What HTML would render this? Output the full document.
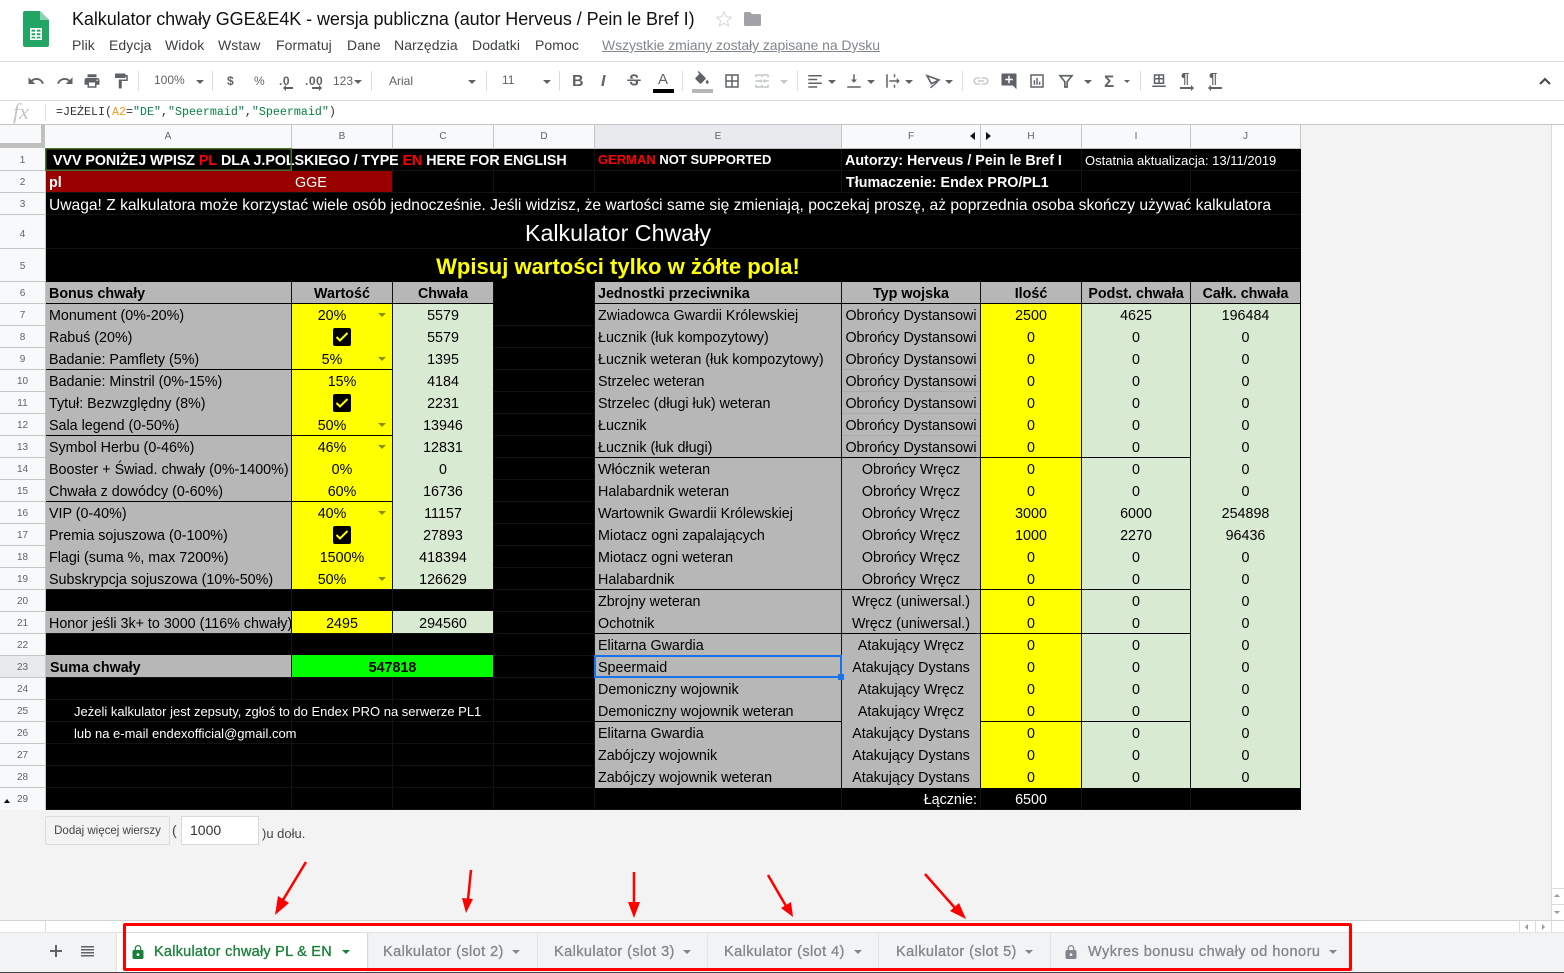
<!DOCTYPE html>
<html lang="pl"><head><meta charset="utf-8"><title>Kalkulator chwały</title>
<style>
html,body{margin:0;padding:0;width:1564px;height:973px;overflow:hidden;background:#fff;font-family:"Liberation Sans",sans-serif}
div,span,i,svg{position:absolute}
span.x,b.x{position:static}
.f{position:absolute}
.r{left:0;width:1564px;height:22px;font:14.3px/22px "Liberation Sans",sans-serif;color:#000}
.r i{font-style:normal;white-space:nowrap;top:1px}
.A{left:49px}.B{left:292px;width:100px;text-align:center}.D{left:292px;width:80px;text-align:center}
.C{left:393px;width:100px;text-align:center}.E{left:598px}.F{left:842px;width:138px;text-align:center}
.H{left:981px;width:100px;text-align:center}.I{left:1082px;width:108px;text-align:center}.J{left:1191px;width:109px;text-align:center}
.h i{font-weight:bold}
.m{font:14px/18px "Liberation Sans",sans-serif;color:#3c4043;top:36px;white-space:nowrap;letter-spacing:.08px}
.cl{top:125px;height:23px;border-right:1px solid #c4c7c5;background:#f8f9fa;font:10px/23px "Liberation Sans",sans-serif;color:#5f6368;text-align:center}
.rn{left:0;width:45px;font:10px/23px "Liberation Sans",sans-serif;color:#5f6368;text-align:center;border-bottom:1px solid #c4c7c5;height:21px}
.ck{left:333px;width:18px;height:18px;background:#000;border-radius:2px}
.dd{left:378px;width:0;height:0;border-left:4px solid transparent;border-right:4px solid transparent;border-top:4px solid #8c8c00}
.v{background:#000;width:1px}.g{background:#121212;width:1px}
.tb{top:81px;font:12px/1 "Liberation Sans",sans-serif;color:#5f6368;white-space:nowrap}
.sep{top:71px;width:1px;height:20px;background:#dadce0}
.ar{top:80px;width:0;height:0;border-left:4px solid transparent;border-right:4px solid transparent;border-top:4px solid #5f6368}
.ic{top:72px;width:18px;height:18px;fill:#5f6368}
.tab{top:942px;font:14.5px/20px "Liberation Sans",sans-serif;color:#80868b;white-space:nowrap;-webkit-text-stroke:.3px #80868b}
.tar{top:950px;width:0;height:0;border-left:4px solid transparent;border-right:4px solid transparent;border-top:4px solid #80868b}
.tsp{top:933px;width:1px;height:39px;background:#e3e5e7}
</style></head><body>

<!-- title bar -->
<svg style="left:23px;top:11px" width="26" height="36" viewBox="0 0 26 36"><path d="M2 0h15l9 9v25a2 2 0 0 1-2 2H2a2 2 0 0 1-2-2V2a2 2 0 0 1 2-2z" fill="#23a566"/><path d="M17 0l9 9h-9z" fill="#8ed1b1"/><path d="M7 17h12v12H7zm1.600 1.600v2h3.600v-2zm5.200 0v2h3.600v-2zm-5.200 3.600v2h3.600v-2zm5.200 0v2h3.600v-2zm-5.200 3.600v1.600h3.600v-1.600zm5.200 0v1.600h3.600v-1.600z" fill="#fff" fill-rule="evenodd"/></svg>
<div style="left:72px;top:8px;font:18px/22px 'Liberation Sans',sans-serif;color:#111;white-space:nowrap;letter-spacing:-.075px">Kalkulator chwały GGE&amp;E4K - wersja publiczna (autor Herveus / Pein le Bref I)</div>
<svg style="left:715px;top:10px" width="18" height="18" viewBox="0 0 24 24"><path d="M12 2.500l2.900 6.500 7.100.7-5.400 4.700 1.600 7-6.200-3.700-6.200 3.700 1.600-7L2 9.700l7.100-.7z" fill="none" stroke="#dadce0" stroke-width="1.600"/></svg>
<svg style="left:744px;top:12px" width="17" height="14" viewBox="0 0 17 14"><path d="M0 1.500A1.500 1.500 0 0 1 1.500 0H6l2 2h7.500A1.500 1.500 0 0 1 17 3.500V12.500A1.500 1.500 0 0 1 15.500 14h-14A1.500 1.500 0 0 1 0 12.500z" fill="#a2a3a7"/></svg>
<div class="m" style="left:72px">Plik</div><div class="m" style="left:109px">Edycja</div><div class="m" style="left:165px">Widok</div><div class="m" style="left:218px">Wstaw</div><div class="m" style="left:276px">Formatuj</div><div class="m" style="left:347px">Dane</div><div class="m" style="left:394px">Narzędzia</div><div class="m" style="left:472px">Dodatki</div><div class="m" style="left:535px">Pomoc</div>
<div class="m" style="left:602px;color:#80868b;text-decoration:underline;letter-spacing:-.07px">Wszystkie zmiany zostały zapisane na Dysku</div>
<div class="f" style="left:0;top:61px;width:1564px;height:1px;background:#dadce0"></div>

<!-- toolbar -->
<svg class="ic" style="left:27px" viewBox="0 0 24 24"><path d="M12.500 8c-2.650 0-5.050.99-6.900 2.600L2 7v9h9l-3.620-3.620c1.390-1.160 3.160-1.880 5.120-1.880 3.540 0 6.550 2.310 7.600 5.500l2.370-.78C21.080 11.030 17.150 8 12.500 8z"/></svg>
<svg class="ic" style="left:56px" viewBox="0 0 24 24"><path d="M18.400 10.600C16.550 8.990 14.150 8 11.500 8c-4.650 0-8.580 3.030-9.960 7.220L3.900 16c1.050-3.190 4.050-5.500 7.600-5.500 1.950 0 3.730.72 5.120 1.880L13 16h9V7l-3.600 3.600z"/></svg>
<svg class="ic" style="left:83px" viewBox="0 0 24 24"><path d="M19 8H5c-1.660 0-3 1.340-3 3v6h4v4h12v-4h4v-6c0-1.660-1.340-3-3-3zm-3 11H8v-5h8v5zm3-7c-.55 0-1-.45-1-1s.45-1 1-1 1 .45 1 1-.45 1-1 1zm-1-9H6v4h12V3z"/></svg>
<svg class="ic" style="left:112px" viewBox="0 0 24 24"><path d="M18 4V3c0-.55-.45-1-1-1H5c-.55 0-1 .45-1 1v4c0 .55.45 1 1 1h12c.55 0 1-.45 1-1V6h1v4H9v11c0 .55.45 1 1 1h2c.55 0 1-.45 1-1v-9h8V4h-3z"/></svg>
<div class="sep" style="left:138px"></div>
<div class="tb" style="left:154px;top:74px">100%</div><div class="ar" style="left:196px"></div>
<div class="sep" style="left:212px"></div>
<div class="tb" style="left:227px;top:75px;font-weight:bold">$</div><div class="tb" style="left:254px;top:75px">%</div>
<div class="tb" style="left:279px;top:75px;font-weight:bold;letter-spacing:.5px">.0</div><svg style="left:283px;top:85px" width="10" height="6"><path d="M0 3l3-3v2h7v2H3v2z" fill="#5f6368"/></svg>
<div class="tb" style="left:305px;top:75px;font-weight:bold;letter-spacing:.5px">.00</div><svg style="left:312px;top:85px" width="10" height="6"><path d="M10 3L7 0v2H0v2h7v2z" fill="#5f6368"/></svg>
<div class="tb" style="left:333px;top:75px">123</div><div class="ar" style="left:354px"></div>
<div class="sep" style="left:371px"></div>
<div class="tb" style="left:389px;top:75px">Arial</div><div class="ar" style="left:468px"></div>
<div class="sep" style="left:486px"></div>
<div class="tb" style="left:502px;top:74px">11</div><div class="ar" style="left:543px"></div>
<div class="sep" style="left:559px"></div>
<div class="tb" style="left:572px;top:74px;font:bold 16px/16px 'Liberation Sans',sans-serif">B</div>
<div class="tb" style="left:601px;top:74px;font:italic bold 16px/16px 'Liberation Sans',sans-serif">I</div>
<svg class="ic" style="left:625px" viewBox="0 0 24 24"><path d="M6.850 7.080C6.850 4.370 9.450 3 12.240 3c1.640 0 3 .49 3.900 1.280.77.650 1.460 1.730 1.460 3.240h-3.010c0-.31-.05-.59-.15-.85-.29-.860-1.200-1.280-2.250-1.280-1.860 0-2.340 1.020-2.340 1.700 0 .480.250.880.740 1.210.38.250.77.480 1.410.7H7.390c-.210-.340-.540-.890-.540-1.920zM21 12v-2H3v2h9.620c1.150.450 1.960.750 1.960 1.970 0 1-.810 1.670-2.280 1.670-1.540 0-2.930-.540-2.930-2.510H6.400c0 .550.080 1.130.24 1.580.810 2.290 3.290 3.300 5.670 3.300 2.270 0 5.300-.890 5.300-4.050 0-.300-.010-1.160-.48-1.960H21z"/></svg>
<div class="tb" style="left:658px;top:72px;font:15px/16px 'Liberation Sans',sans-serif">A</div><div class="f" style="left:653px;top:89px;width:21px;height:4px;background:#000"></div>
<div class="sep" style="left:682px"></div>
<svg class="ic" style="left:693px;top:71px" viewBox="0 0 24 24"><path d="M16.560 8.940L7.620 0 6.210 1.410l2.380 2.380-5.150 5.150c-.59.59-.59 1.540 0 2.120l5.500 5.500c.29.29.68.44 1.060.44s.77-.15 1.060-.44l5.500-5.500c.59-.58.59-1.530 0-2.120zM19 11.500s-2 2.170-2 3.500c0 1.100.9 2 2 2s2-.9 2-2c0-1.330-2-3.500-2-3.500z"/></svg><div class="f" style="left:692px;top:89px;width:21px;height:4px;background:#b7b7b7"></div>
<svg class="ic" style="left:723px" viewBox="0 0 24 24"><path d="M3 3v18h18V3H3zm8 16H5v-6h6v6zm0-8H5V5h6v6zm8 8h-6v-6h6v6zm0-8h-6V5h6v6z"/></svg>
<svg class="ic" style="left:753px;fill:#c4c7c9" viewBox="0 0 24 24"><path d="M3 3h18v4h-2V5H5v2H3zM3 17h2v2h14v-2h2v4H3zM3 11h7v-2l3 3-3 3v-2H3zM21 11h-5V9l-3 3 3 3v-2h5zM11 3h2v4h-2zM11 17h2v4h-2z"/></svg><div class="ar" style="left:780px;border-top-color:#c4c7c9"></div>
<div class="sep" style="left:797px"></div>
<svg class="ic" style="left:806px" viewBox="0 0 24 24"><path d="M3 4h18v2H3zM3 9h12v2H3zM3 14h18v2H3zM3 19h12v2H3z"/></svg><div class="ar" style="left:828px"></div>
<svg class="ic" style="left:845px" viewBox="0 0 24 24"><path d="M3 19h18v2H3zM16 10h-3V3h-2v7H8l4 4.500z"/></svg><div class="ar" style="left:867px"></div>
<svg class="ic" style="left:884px" viewBox="0 0 24 24"><path d="M3 3h2v18H3zM7 11h10V8l4 4-4 4v-3H7zM13 3h2v4h-2zM13 17h2v4h-2z"/></svg><div class="ar" style="left:905px"></div>
<svg class="ic" style="left:925px;top:73px;width:16px;height:16px" viewBox="0 0 24 24"><path d="M3 4L21 10.500 9.500 16z" fill="none" stroke="#5f6368" stroke-width="2.400"/><path d="M20 13.500L9 23l-1.500-1.500L18.500 12z"/></svg><div class="ar" style="left:945px"></div>
<div class="sep" style="left:962px"></div>
<svg class="ic" style="left:972px;fill:#c4c7c9" viewBox="0 0 24 24"><path d="M3.900 12c0-1.710 1.390-3.100 3.100-3.100h4V7H7c-2.760 0-5 2.240-5 5s2.240 5 5 5h4v-1.900H7c-1.710 0-3.100-1.390-3.100-3.100zM8 13h8v-2H8v2zm9-6h-4v1.900h4c1.710 0 3.100 1.390 3.100 3.100s-1.390 3.100-3.100 3.100h-4V17h4c2.760 0 5-2.240 5-5s-2.240-5-5-5z"/></svg>
<svg class="ic" style="left:1000px" viewBox="0 0 24 24"><path d="M21 2H3c-.6 0-1 .4-1 1v14c0 .6.4 1 1 1h14l5 5V3c0-.6-.4-1-1-1zm-4 9h-4v4h-2v-4H7V9h4V5h2v4h4z"/></svg>
<svg class="ic" style="left:1028px" viewBox="0 0 24 24"><path d="M3 3h18v18H3zm2 2v14h14V5zM7.500 11h2v6h-2zM11 8h2v9h-2zM14.500 13h2v4h-2z" fill-rule="evenodd"/></svg>
<svg class="ic" style="left:1057px" viewBox="0 0 24 24"><path d="M4 5h16l-6.500 8v7h-3v-7z" fill="none" stroke="#5f6368" stroke-width="2.200"/></svg><div class="ar" style="left:1084px"></div>
<div class="tb" style="left:1104px;top:73px;font:bold 17px/17px 'Liberation Sans','DejaVu Sans',sans-serif">Σ</div><div class="ar" style="left:1124px;border-left-width:3px;border-right-width:3px;border-top-width:3px"></div>
<div class="sep" style="left:1140px"></div>
<svg class="ic" style="left:1150px" viewBox="0 0 24 24"><path d="M5 3h14v13H5zm2 2v3h4V5zm6 0v3h4V5zm-6 5v4h4v-4zm6 0v4h4v-4zM3 18h18v2H3z" fill-rule="evenodd"/></svg>
<div class="tb" style="left:1181px;top:72px;font:bold 15px/14px 'Liberation Sans',sans-serif">¶</div><svg style="left:1180px;top:85px" width="14" height="6"><path d="M0 2h11V0l3 3-3 3V4H0z" fill="#5f6368"/></svg>
<div class="tb" style="left:1209px;top:72px;font:bold 15px/14px 'Liberation Sans',sans-serif">¶</div><svg style="left:1208px;top:85px" width="14" height="6"><path d="M14 2H3V0L0 3l3 3V4h11z" fill="#5f6368"/></svg>
<svg style="left:1539px;top:77px" width="12" height="8"><path d="M1 7l5-5 5 5" fill="none" stroke="#444" stroke-width="2"/></svg>
<div class="f" style="left:0;top:100px;width:1564px;height:1px;background:#dadce0"></div>

<!-- formula bar -->
<div style="left:13px;top:102px;font:italic 22px/20px 'Liberation Serif',serif;color:#c4c4c4">fx</div>
<div class="f" style="left:45px;top:104px;width:1px;height:17px;background:#dadce0"></div>
<div style="left:56px;top:104px;font:11.67px/16px 'Liberation Mono',monospace;color:#333;white-space:nowrap">=JEŻELI(<b class="x" style="font-weight:normal;color:#f7981d">A2</b>=<b class="x" style="font-weight:normal;color:#0b8043">"DE"</b>,<b class="x" style="font-weight:normal;color:#0b8043">"Speermaid"</b>,<b class="x" style="font-weight:normal;color:#0b8043">"Speermaid"</b>)</div>
<div class="f" style="left:0;top:124px;width:1564px;height:1px;background:#c4c7c5"></div>

<!-- sheet background -->
<div class="f" style="left:0;top:125px;width:1551px;height:796px;background:#f3f3f3"></div>
<div class="f" style="left:1551px;top:125px;width:1px;height:796px;background:#dadce0"></div>
<div class="f" style="left:1552px;top:125px;width:12px;height:796px;background:#fff"></div>

<!-- column headers -->
<div class="f" style="left:0;top:125px;width:41px;height:18px;background:#f8f9fa"></div>
<div class="f" style="left:41px;top:125px;width:4px;height:23px;background:#c0c0c0"></div>
<div class="f" style="left:0;top:143px;width:45px;height:5px;background:#c0c0c0"></div>
<div class="cl" style="left:45px;width:246px">A</div>
<div class="cl" style="left:292px;width:100px">B</div>
<div class="cl" style="left:393px;width:100px">C</div>
<div class="cl" style="left:494px;width:100px">D</div>
<div class="cl" style="left:595px;width:246px;background:#e8eaed">E</div>
<div class="cl" style="left:842px;width:138px">F</div>
<div class="cl" style="left:981px;width:100px">H</div>
<div class="cl" style="left:1082px;width:108px">I</div>
<div class="cl" style="left:1191px;width:109px">J</div>
<div class="f" style="left:970px;top:132px;width:0;height:0;border-top:4px solid transparent;border-bottom:4px solid transparent;border-right:5px solid #111"></div>
<div class="f" style="left:986px;top:132px;width:0;height:0;border-top:4px solid transparent;border-bottom:4px solid transparent;border-left:5px solid #111"></div>
<div class="f" style="left:45px;top:148px;width:1256px;height:1px;background:#c0c0c0"></div>

<!-- row headers -->
<div class="f" style="left:0;top:148px;width:45px;height:662px;background:#f8f9fa"></div>
<div class="f" style="left:45px;top:148px;width:1px;height:662px;background:#c4c7c5"></div>
<div class="rn" style="top:149px">1</div><div class="rn" style="top:171px">2</div><div class="rn" style="top:193px">3</div>
<div class="rn" style="top:215px;height:33px;line-height:39px">4</div><div class="rn" style="top:249px;height:32px;line-height:36px">5</div>
<div class="rn" style="top:282px">6</div><div class="rn" style="top:304px">7</div><div class="rn" style="top:326px">8</div><div class="rn" style="top:348px">9</div><div class="rn" style="top:370px">10</div><div class="rn" style="top:392px">11</div><div class="rn" style="top:414px">12</div><div class="rn" style="top:436px">13</div><div class="rn" style="top:458px">14</div><div class="rn" style="top:480px">15</div><div class="rn" style="top:502px">16</div><div class="rn" style="top:524px">17</div><div class="rn" style="top:546px">18</div><div class="rn" style="top:568px">19</div><div class="rn" style="top:590px">20</div><div class="rn" style="top:612px">21</div><div class="rn" style="top:634px">22</div><div class="rn" style="top:656px;background:#e8eaed">23</div><div class="rn" style="top:678px">24</div><div class="rn" style="top:700px">25</div><div class="rn" style="top:722px">26</div><div class="rn" style="top:744px">27</div><div class="rn" style="top:766px">28</div><div class="rn" style="top:788px;border:0;height:22px;line-height:24px">29</div>
<div class="f" style="left:4px;top:799px;width:0;height:0;border-left:3.500px solid transparent;border-right:3.500px solid transparent;border-bottom:4px solid #111"></div>

<!-- black sheet with gridlines -->
<div class="f" style="left:46px;top:149px;width:1255px;height:661px;background:#000"></div>
<div class="f" style="left:46px;top:149px;width:1255px;height:44px;background:repeating-linear-gradient(to bottom,transparent 0 21px,#121212 21px 22px)"></div>
<div class="f" style="left:46px;top:214px;width:1255px;height:1px;background:#121212"></div>
<div class="f" style="left:46px;top:248px;width:1255px;height:1px;background:#121212"></div>
<div class="f" style="left:46px;top:304px;width:1255px;height:506px;background:repeating-linear-gradient(to bottom,transparent 0 21px,#121212 21px 22px)"></div>
<div class="g f" style="left:291px;top:149px;height:44px"></div><div class="g f" style="left:392px;top:149px;height:44px"></div><div class="g f" style="left:493px;top:149px;height:44px"></div><div class="g f" style="left:594px;top:149px;height:44px"></div><div class="g f" style="left:841px;top:149px;height:44px"></div><div class="g f" style="left:980px;top:149px;height:44px"></div><div class="g f" style="left:1081px;top:149px;height:44px"></div><div class="g f" style="left:1190px;top:149px;height:44px"></div>
<div class="g f" style="left:291px;top:282px;height:528px"></div><div class="g f" style="left:392px;top:282px;height:528px"></div><div class="g f" style="left:493px;top:282px;height:528px"></div><div class="g f" style="left:594px;top:282px;height:528px"></div><div class="g f" style="left:841px;top:282px;height:528px"></div><div class="g f" style="left:980px;top:282px;height:528px"></div><div class="g f" style="left:1081px;top:282px;height:528px"></div><div class="g f" style="left:1190px;top:282px;height:528px"></div>

<!-- fills -->
<div class="f" style="left:46px;top:171px;width:346px;height:21px;background:#980000"></div>
<div class="f" style="left:46px;top:282px;width:245px;height:21px;background:#b7b7b7"></div>
<div class="f" style="left:292px;top:282px;width:100px;height:21px;background:#b7b7b7"></div>
<div class="f" style="left:393px;top:282px;width:100px;height:21px;background:#b7b7b7"></div>
<div class="f" style="left:595px;top:282px;width:246px;height:21px;background:#b7b7b7"></div>
<div class="f" style="left:842px;top:282px;width:138px;height:21px;background:#b7b7b7"></div>
<div class="f" style="left:981px;top:282px;width:100px;height:21px;background:#b7b7b7"></div>
<div class="f" style="left:1082px;top:282px;width:108px;height:21px;background:#b7b7b7"></div>
<div class="f" style="left:1191px;top:282px;width:109px;height:21px;background:#b7b7b7"></div>

<div class="f" style="left:46px;top:304px;width:245px;height:285px;background:#b7b7b7"></div>
<div class="f" style="left:292px;top:304px;width:100px;height:285px;background:#ff0"></div>
<div class="f" style="left:393px;top:304px;width:100px;height:285px;background:#d9ead3"></div>
<div class="f" style="left:46px;top:369px;width:346px;height:1px;background:#000"></div>
<div class="f" style="left:46px;top:435px;width:346px;height:1px;background:#000"></div>
<div class="f" style="left:46px;top:501px;width:346px;height:1px;background:#000"></div>

<div class="f" style="left:46px;top:611px;width:245px;height:22px;background:#b7b7b7"></div>
<div class="f" style="left:292px;top:611px;width:100px;height:22px;background:#ff0"></div>
<div class="f" style="left:393px;top:611px;width:100px;height:22px;background:#d9ead3"></div>
<div class="f" style="left:46px;top:655px;width:245px;height:22px;background:#b7b7b7"></div>
<div class="f" style="left:292px;top:655px;width:201px;height:22px;background:#0f0"></div>

<div class="f" style="left:595px;top:304px;width:246px;height:484px;background:#b7b7b7"></div>
<div class="f" style="left:842px;top:304px;width:138px;height:484px;background:#b7b7b7"></div>
<div class="f" style="left:981px;top:304px;width:100px;height:484px;background:#ff0"></div>
<div class="f" style="left:1082px;top:304px;width:108px;height:484px;background:#d9ead3"></div>
<div class="f" style="left:1191px;top:304px;width:109px;height:484px;background:#d9ead3"></div>
<div class="f" style="left:842px;top:369px;width:138px;height:1px;background:#ababab"></div>
<div class="f" style="left:842px;top:391px;width:138px;height:1px;background:#ababab"></div>
<div class="f" style="left:842px;top:413px;width:138px;height:1px;background:#ababab"></div>
<div class="f" style="left:842px;top:435px;width:138px;height:1px;background:#ababab"></div>
<div class="f" style="left:595px;top:457px;width:595px;height:1px;background:#000"></div>
<div class="f" style="left:595px;top:589px;width:595px;height:1px;background:#000"></div>
<div class="f" style="left:595px;top:633px;width:595px;height:1px;background:#000"></div>
<div class="f" style="left:595px;top:721px;width:246px;height:1px;background:#000"></div>
<div class="f" style="left:981px;top:721px;width:209px;height:1px;background:#000"></div>
<div class="f" style="left:1300px;top:282px;width:1px;height:528px;background:#000"></div>

<!-- rows text -->
<div class="r" style="top:149px;font-weight:bold;color:#fff"><i style="left:53px;letter-spacing:-.06px">VVV PONIŻEJ WPISZ <b class="x" style="color:#f00">PL</b> DLA J.POLSKIEGO / TYPE <b class="x" style="color:#f00">EN</b> HERE FOR ENGLISH</i><i style="left:598px;font-size:13px;top:0"><b class="x" style="color:#f00">GERMAN</b> NOT SUPPORTED</i><i style="left:845px">Autorzy: Herveus / Pein le Bref I</i><i style="left:1085px;font-weight:normal;font-size:13px">Ostatnia aktualizacja: 13/11/2019</i></div>
<div class="r" style="top:171px;color:#fff"><i class="A" style="font-weight:bold">pl</i><i style="left:295px">GGE</i><i style="left:846px;font-weight:bold">Tłumaczenie: Endex PRO/PL1</i></div>
<div class="r" style="top:194px;color:#fff;font-size:15.6px"><i class="A">Uwaga! Z kalkulatora może korzystać wiele osób jednocześnie. Jeśli widzisz, że wartości same się zmieniają, poczekaj proszę, aż poprzednia osoba skończy używać kalkulatora</i></div>
<div class="r" style="top:221px;color:#fff;font-size:23.25px"><i style="left:46px;width:1144px;text-align:center">Kalkulator Chwały</i></div>
<div class="r" style="top:255px;color:#ff0;font-size:22.06px;font-weight:bold"><i style="left:46px;width:1144px;text-align:center">Wpisuj wartości tylko w żółte pola!</i></div>

<div class="r h" style="top:282px"><i class="A">Bonus chwały</i><i class="B">Wartość</i><i class="C">Chwała</i><i class="E">Jednostki przeciwnika</i><i class="F">Typ wojska</i><i class="H">Ilość</i><i class="I">Podst. chwała</i><i class="J">Całk. chwała</i></div>
<div class="r" style="top:304px"><i class="A">Monument (0%-20%)</i><i class="D">20%</i><i class="C">5579</i><i class="E">Zwiadowca Gwardii Królewskiej</i><i class="F">Obrońcy Dystansowi</i><i class="H">2500</i><i class="I">4625</i><i class="J">196484</i></div>
<div class="r" style="top:326px"><i class="A">Rabuś (20%)</i><i class="C">5579</i><i class="E">Łucznik (łuk kompozytowy)</i><i class="F">Obrońcy Dystansowi</i><i class="H">0</i><i class="I">0</i><i class="J">0</i></div>
<div class="r" style="top:348px"><i class="A">Badanie: Pamflety (5%)</i><i class="D">5%</i><i class="C">1395</i><i class="E">Łucznik weteran (łuk kompozytowy)</i><i class="F">Obrońcy Dystansowi</i><i class="H">0</i><i class="I">0</i><i class="J">0</i></div>
<div class="r" style="top:370px"><i class="A">Badanie: Minstril (0%-15%)</i><i class="B">15%</i><i class="C">4184</i><i class="E">Strzelec weteran</i><i class="F">Obrońcy Dystansowi</i><i class="H">0</i><i class="I">0</i><i class="J">0</i></div>
<div class="r" style="top:392px"><i class="A">Tytuł: Bezwzględny (8%)</i><i class="C">2231</i><i class="E">Strzelec (długi łuk) weteran</i><i class="F">Obrońcy Dystansowi</i><i class="H">0</i><i class="I">0</i><i class="J">0</i></div>
<div class="r" style="top:414px"><i class="A">Sala legend (0-50%)</i><i class="D">50%</i><i class="C">13946</i><i class="E">Łucznik</i><i class="F">Obrońcy Dystansowi</i><i class="H">0</i><i class="I">0</i><i class="J">0</i></div>
<div class="r" style="top:436px"><i class="A">Symbol Herbu (0-46%)</i><i class="D">46%</i><i class="C">12831</i><i class="E">Łucznik (łuk długi)</i><i class="F">Obrońcy Dystansowi</i><i class="H">0</i><i class="I">0</i><i class="J">0</i></div>
<div class="r" style="top:458px"><i class="A">Booster + Świad. chwały (0%-1400%)</i><i class="B">0%</i><i class="C">0</i><i class="E">Włócznik weteran</i><i class="F">Obrońcy Wręcz</i><i class="H">0</i><i class="I">0</i><i class="J">0</i></div>
<div class="r" style="top:480px"><i class="A">Chwała z dowódcy (0-60%)</i><i class="B">60%</i><i class="C">16736</i><i class="E">Halabardnik weteran</i><i class="F">Obrońcy Wręcz</i><i class="H">0</i><i class="I">0</i><i class="J">0</i></div>
<div class="r" style="top:502px"><i class="A">VIP (0-40%)</i><i class="D">40%</i><i class="C">11157</i><i class="E">Wartownik Gwardii Królewskiej</i><i class="F">Obrońcy Wręcz</i><i class="H">3000</i><i class="I">6000</i><i class="J">254898</i></div>
<div class="r" style="top:524px"><i class="A">Premia sojuszowa (0-100%)</i><i class="C">27893</i><i class="E">Miotacz ogni zapalających</i><i class="F">Obrońcy Wręcz</i><i class="H">1000</i><i class="I">2270</i><i class="J">96436</i></div>
<div class="r" style="top:546px"><i class="A">Flagi (suma %, max 7200%)</i><i class="B">1500%</i><i class="C">418394</i><i class="E">Miotacz ogni weteran</i><i class="F">Obrońcy Wręcz</i><i class="H">0</i><i class="I">0</i><i class="J">0</i></div>
<div class="r" style="top:568px"><i class="A">Subskrypcja sojuszowa (10%-50%)</i><i class="D">50%</i><i class="C">126629</i><i class="E">Halabardnik</i><i class="F">Obrońcy Wręcz</i><i class="H">0</i><i class="I">0</i><i class="J">0</i></div>
<div class="r" style="top:590px"><i class="E">Zbrojny weteran</i><i class="F">Wręcz (uniwersal.)</i><i class="H">0</i><i class="I">0</i><i class="J">0</i></div>
<div class="r" style="top:612px"><i class="A">Honor jeśli 3k+ to 3000 (116% chwały)</i><i class="B">2495</i><i class="C">294560</i><i class="E">Ochotnik</i><i class="F">Wręcz (uniwersal.)</i><i class="H">0</i><i class="I">0</i><i class="J">0</i></div>
<div class="r" style="top:634px"><i class="E">Elitarna Gwardia</i><i class="F">Atakujący Wręcz</i><i class="H">0</i><i class="I">0</i><i class="J">0</i></div>
<div class="r" style="top:656px"><i class="A" style="left:50px;font-weight:bold">Suma chwały</i><i style="left:292px;width:201px;text-align:center;font-weight:bold">547818</i><i class="E">Speermaid</i><i class="F">Atakujący Dystans</i><i class="H">0</i><i class="I">0</i><i class="J">0</i></div>
<div class="r" style="top:678px"><i class="E">Demoniczny wojownik</i><i class="F">Atakujący Wręcz</i><i class="H">0</i><i class="I">0</i><i class="J">0</i></div>
<div class="r" style="top:700px"><i style="left:74px;color:#fff;font-size:13px">Jeżeli kalkulator jest zepsuty, zgłoś to do Endex PRO na serwerze PL1</i><i class="E">Demoniczny wojownik weteran</i><i class="F">Atakujący Wręcz</i><i class="H">0</i><i class="I">0</i><i class="J">0</i></div>
<div class="r" style="top:722px"><i style="left:74px;color:#fff;font-size:13px">lub na e-mail endexofficial@gmail.com</i><i class="E">Elitarna Gwardia</i><i class="F">Atakujący Dystans</i><i class="H">0</i><i class="I">0</i><i class="J">0</i></div>
<div class="r" style="top:744px"><i class="E">Zabójczy wojownik</i><i class="F">Atakujący Dystans</i><i class="H">0</i><i class="I">0</i><i class="J">0</i></div>
<div class="r" style="top:766px"><i class="E">Zabójczy wojownik weteran</i><i class="F">Atakujący Dystans</i><i class="H">0</i><i class="I">0</i><i class="J">0</i></div>
<div class="r" style="top:788px;color:#fff"><i style="left:842px;width:135px;text-align:right">Łącznie:</i><i class="H">6500</i></div>

<!-- checkboxes -->
<div class="ck" style="top:328px"></div><svg style="left:335px;top:331px" width="14" height="12"><path d="M1.500 6l3.500 3.500L12.500 2" fill="none" stroke="#ff0" stroke-width="2"/></svg>
<div class="ck" style="top:394px"></div><svg style="left:335px;top:397px" width="14" height="12"><path d="M1.500 6l3.500 3.500L12.500 2" fill="none" stroke="#ff0" stroke-width="2"/></svg>
<div class="ck" style="top:526px"></div><svg style="left:335px;top:529px" width="14" height="12"><path d="M1.500 6l3.500 3.500L12.500 2" fill="none" stroke="#ff0" stroke-width="2"/></svg>
<!-- dropdown arrows -->
<div class="dd" style="top:313px"></div><div class="dd" style="top:357px"></div><div class="dd" style="top:423px"></div><div class="dd" style="top:445px"></div><div class="dd" style="top:511px"></div><div class="dd" style="top:577px"></div>

<!-- selections -->
<div class="f" style="left:45px;top:148px;width:245px;height:21px;border:1px solid #4f6f2f;box-shadow:inset 0 0 0 .5px #4f6f2f"></div>
<div class="f" style="left:594px;top:655px;width:244px;height:19px;border:2px solid #1a73e8"></div>
<div class="f" style="left:838px;top:674px;width:6px;height:6px;background:#1a73e8;border:0"></div>

<!-- add rows -->
<div class="f" style="left:45px;top:816px;width:123px;height:27px;border:1px solid #dcdcdc;background:#f3f3f3;border-radius:2px;font:11.5px/28px 'Liberation Sans',sans-serif;color:#444;text-align:center;white-space:nowrap">Dodaj więcej wierszy</div>
<div style="left:172px;top:822px;font:14px/16px 'Liberation Sans',sans-serif;color:#444">(</div>
<div class="f" style="left:181px;top:816px;width:68px;height:27px;padding-left:8px;border:1px solid #d9d9d9;background:#fff;font:14px/27px 'Liberation Sans',sans-serif;color:#333">1000</div>
<div style="left:262px;top:826px;font:13px/16px 'Liberation Sans',sans-serif;color:#444;white-space:nowrap">)u dołu.</div>

<!-- scroll bars -->
<div class="f" style="left:0;top:920px;width:1564px;height:1px;background:#d4d4d4"></div>
<div class="f" style="left:0;top:921px;width:1564px;height:12px;background:#fff"></div>
<div class="f" style="left:45px;top:921px;width:1px;height:12px;background:#dadce0"></div>
<div class="f" style="left:1551px;top:888px;width:13px;height:1px;background:#dadce0"></div>
<div class="f" style="left:1551px;top:904px;width:13px;height:1px;background:#dadce0"></div>
<div class="f" style="left:1554px;top:894px;width:0;height:0;border-left:3px solid transparent;border-right:3px solid transparent;border-bottom:3px solid #999"></div>
<div class="f" style="left:1554px;top:911px;width:0;height:0;border-left:3px solid transparent;border-right:3px solid transparent;border-top:3px solid #999"></div>
<div class="f" style="left:1519px;top:921px;width:1px;height:12px;background:#dadce0"></div>
<div class="f" style="left:1535px;top:921px;width:1px;height:12px;background:#dadce0"></div>
<div class="f" style="left:1551px;top:921px;width:1px;height:12px;background:#dadce0"></div>
<div class="f" style="left:1525px;top:924px;width:0;height:0;border-top:3px solid transparent;border-bottom:3px solid transparent;border-right:3px solid #999"></div>
<div class="f" style="left:1542px;top:924px;width:0;height:0;border-top:3px solid transparent;border-bottom:3px solid transparent;border-left:3px solid #999"></div>

<!-- tabs -->
<div class="f" style="left:0;top:932px;width:1564px;height:41px;background:#f1f3f4;border-top:1px solid #e3e5e7;box-sizing:border-box"></div>
<svg style="left:50px;top:945px" width="12" height="12"><path d="M5 0h2v5h5v2H7v5H5V7H0V5h5z" fill="#5f6368"/></svg>
<svg style="left:81px;top:946px" width="13" height="11"><path d="M0 0h13v1.500H0zM0 3h13v1.500H0zM0 6h13v1.500H0zM0 9h13v1.500H0z" fill="#5f6368"/></svg>
<div class="f" style="left:117px;top:933px;width:250px;height:39px;background:#fff;box-shadow:1px 0 1px rgba(0,0,0,.15),-1px 0 1px rgba(0,0,0,.08)"></div>
<svg style="left:132px;top:945px" width="12" height="14" viewBox="0 0 12 14"><path d="M10 5h-.7V3.300a3.300 3.300 0 0 0-6.600 0V5H2a1.500 1.500 0 0 0-1.500 1.500v6A1.500 1.500 0 0 0 2 14h8a1.500 1.500 0 0 0 1.500-1.500v-6A1.500 1.500 0 0 0 10 5zM6 11a1.400 1.400 0 1 1 0-2.800A1.400 1.400 0 0 1 6 11zM8.100 5H3.900V3.300a2.100 2.100 0 0 1 4.200 0z" fill="#188038"/></svg>
<div class="tab" style="left:154px;color:#188038;-webkit-text-stroke:.3px #188038;letter-spacing:.24px">Kalkulator chwały PL &amp; EN</div>
<div class="tar" style="left:342px;border-top-color:#188038"></div>
<div class="tab" style="left:383px;letter-spacing:.42px">Kalkulator (slot 2)</div><div class="tar" style="left:512px"></div>
<div class="tsp" style="left:537px"></div>
<div class="tab" style="left:554px;letter-spacing:.42px">Kalkulator (slot 3)</div><div class="tar" style="left:683px"></div>
<div class="tsp" style="left:707px"></div>
<div class="tab" style="left:724px;letter-spacing:.42px">Kalkulator (slot 4)</div><div class="tar" style="left:854px"></div>
<div class="tsp" style="left:878px"></div>
<div class="tab" style="left:896px;letter-spacing:.42px">Kalkulator (slot 5)</div><div class="tar" style="left:1025px"></div>
<div class="tsp" style="left:1050px"></div>
<svg style="left:1065px;top:945px" width="12" height="14" viewBox="0 0 12 14"><path d="M10 5h-.7V3.300a3.300 3.300 0 0 0-6.600 0V5H2a1.500 1.500 0 0 0-1.500 1.500v6A1.500 1.500 0 0 0 2 14h8a1.500 1.500 0 0 0 1.500-1.500v-6A1.500 1.500 0 0 0 10 5zM6 11a1.400 1.400 0 1 1 0-2.800A1.400 1.400 0 0 1 6 11zM8.100 5H3.900V3.300a2.100 2.100 0 0 1 4.200 0z" fill="#80868b"/></svg>
<div class="tab" style="left:1088px;letter-spacing:.5px">Wykres bonusu chwały od honoru</div><div class="tar" style="left:1329px"></div>
<div class="f" style="left:0;top:972px;width:1564px;height:1px;background:#444"></div>

<!-- annotation -->
<div class="f" style="left:123px;top:923px;width:1223px;height:42px;border:3px solid #f00;border-radius:2px"></div>
<svg style="left:0;top:0" width="1564" height="973" viewBox="0 0 1564 973">
<g stroke="#f00" stroke-width="2.500" fill="none"><path d="M306 862L283 900"/><path d="M471 870L468 900"/><path d="M634 872V902"/><path d="M768 875L786 906"/><path d="M925 874L955 908"/></g>
<g fill="#f00"><path d="M275 915L278 896 289 903z"/><path d="M466 913L462 898 473 899z"/><path d="M634 918L628 902 640 902z"/><path d="M793 917L781 908 791 902z"/><path d="M966 919L950 911 959 903z"/></g>
</svg>
</body></html>
